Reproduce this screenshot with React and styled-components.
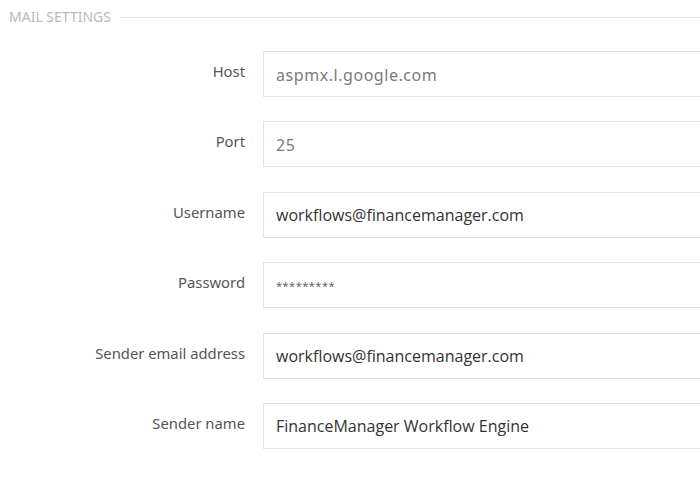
import React from "react";
import styled, { createGlobalStyle } from "styled-components";

const Global = createGlobalStyle`
  html, body { margin: 0; padding: 0; background: #fff; overflow: hidden; }
  body { font-family: "Open Sans", "Noto Sans", sans-serif; }
`;

const Page = styled.div`
  width: 700px;
  height: 478px;
  overflow: hidden;
`;

const Section = styled.section`
  display: flex;
  flex-direction: column;
  padding-top: 8px;
`;

const Header = styled.div`
  display: flex;
  align-items: center;
  gap: 9px;
  padding-left: 9px;
  height: 18px;
`;

const Legend = styled.h2`
  margin: 0;
  font-family: "Noto Sans", "Open Sans", sans-serif;
  font-weight: 400;
  font-size: 14px;
  color: #b9b9b9;
  text-transform: uppercase;
  line-height: 18px;
  white-space: nowrap;
`;

const Rule = styled.div`
  flex: 1;
  height: 1px;
  background: #e6e6e6;
  margin-top: 1px;
`;

const Form = styled.div`
  display: flex;
  flex-direction: column;
  gap: 24.4px;
  padding-top: 25px;
`;

const Row = styled.div`
  display: grid;
  grid-template-columns: 245px 1fr;
  column-gap: 18px;
  align-items: start;
`;

const Label = styled.label`
  text-align: right;
  font-family: "Noto Sans", "Open Sans", sans-serif;
  font-size: 14.8px;
  color: #555;
  padding-top: 10px;
  line-height: 20px;
  white-space: nowrap;
`;

const Input = styled.div`
  height: 46px;
  box-sizing: border-box;
  border: 1px solid #e4e4e4;
  border-right: none;
  padding: 1px 12px 0;
  display: flex;
  align-items: center;
  font-family: ${(p) => (p.$muted ? '"Noto Sans", sans-serif' : '"Open Sans", sans-serif')};
  font-size: ${(p) => (p.$small ? "11px" : "16px")};
  color: ${(p) => (p.$muted ? "#7a7a7a" : p.$small ? "#555" : "#333")};
  letter-spacing: ${(p) => (p.$small ? "0.5px" : p.$muted ? "0.55px" : "0")};
  white-space: nowrap;
`;

const rows = [
  { label: "Host", value: "aspmx.l.google.com", muted: true },
  { label: "Port", value: "25", muted: true },
  { label: "Username", value: "workflows@financemanager.com" },
  { label: "Password", value: "*********", small: true },
  { label: "Sender email address", value: "workflows@financemanager.com" },
  { label: "Sender name", value: "FinanceManager Workflow Engine" },
];

export default function App() {
  return (
    <Page>
      <Global />
      <Section>
        <Header>
          <Legend>Mail Settings</Legend>
          <Rule />
        </Header>
        <Form>
          {rows.map((r) => (
            <Row key={r.label}>
              <Label>{r.label}</Label>
              <Input $muted={r.muted} $small={r.small}>
                {r.value}
              </Input>
            </Row>
          ))}
        </Form>
      </Section>
    </Page>
  );
}
